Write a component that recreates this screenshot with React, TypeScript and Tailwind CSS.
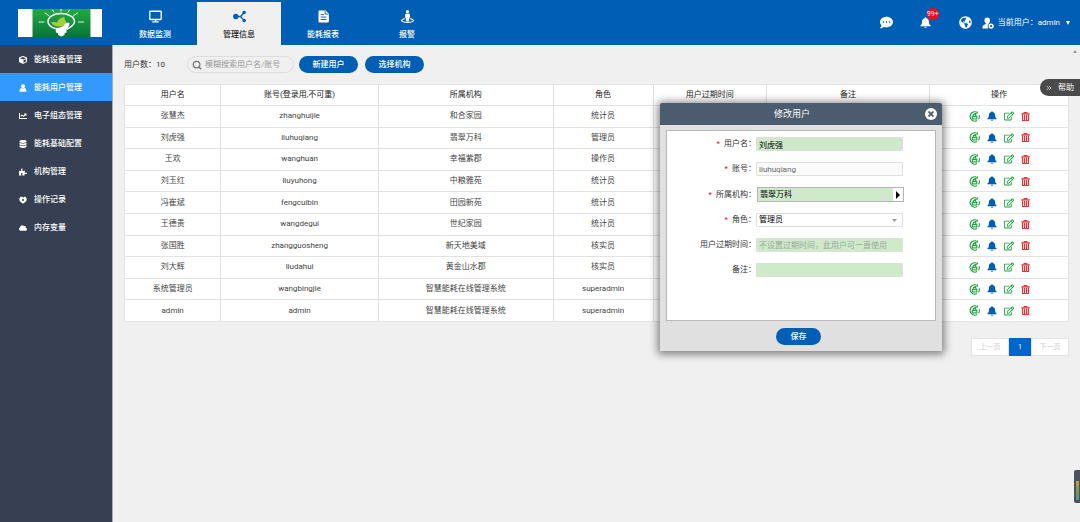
import { useState } from 'react';
import { FaCloud, FaCommentDots, FaCube, FaDatabase, FaPuzzlePiece, FaStreetView } from 'react-icons/fa';
import { FaChartLine, FaGlobeAmericas, FaRegEdit } from 'react-icons/fa';
import { ChevronsRight, Search } from 'lucide-react';

interface User {
  name: string;
  account: string;
  org: string;
  role: string;
}

const users: User[] = [
  { name: '张慧杰', account: 'zhanghuijie', org: '和合家园', role: '统计员' },
  { name: '刘虎强', account: 'liuhuqiang', org: '翡翠万科', role: '管理员' },
  { name: '王欢', account: 'wanghuan', org: '幸福紫郡', role: '操作员' },
  { name: '刘玉红', account: 'liuyuhong', org: '中粮雅苑', role: '统计员' },
  { name: '冯崔斌', account: 'fengcuibin', org: '田园新苑', role: '统计员' },
  { name: '王德贵', account: 'wangdegui', org: '世纪家园', role: '统计员' },
  { name: '张国胜', account: 'zhangguosheng', org: '新天地美域', role: '核实员' },
  { name: '刘大辉', account: 'liudahui', org: '黄金山水郡', role: '核实员' },
  { name: '系统管理员', account: 'wangbingjie', org: '智慧能耗在线管理系统', role: 'superadmin' },
  { name: 'admin', account: 'admin', org: '智慧能耗在线管理系统', role: 'superadmin' },
];

const columns = [
  { title: '用户名', width: 'w-[10.2%]' },
  { title: '账号(登录用,不可重)', width: 'w-[16.7%]' },
  { title: '所属机构', width: 'w-[18.5%]' },
  { title: '角色', width: 'w-[10.6%]' },
  { title: '用户过期时间', width: 'w-[12%]' },
  { title: '备注', width: 'w-[17.3%]' },
  { title: '操作', width: 'w-[14.7%]' },
];

const menu = [
  { label: '能耗设备管理', icon: FaCube },
  { label: '能耗用户管理', icon: PersonIcon },
  { label: '电子组态管理', icon: FaChartLine },
  { label: '能耗基础配置', icon: FaDatabase },
  { label: '机构管理', icon: FaPuzzlePiece },
  { label: '操作记录', icon: RecordIcon },
  { label: '内存变量', icon: FaCloud },
];

const tabs = [
  { label: '数据监测', icon: MonitorIcon },
  { label: '管理信息', icon: NodesIcon },
  { label: '能耗报表', icon: ReportIcon },
  { label: '报警', icon: FaStreetView },
];

function MonitorIcon({ className }: { className?: string }) {
  return (
    <svg viewBox="0 0 14 14" className={className} fill="none" stroke="currentColor" strokeWidth="1.5">
      <rect x="0.8" y="1.4" width="12.4" height="8.8" rx="0.8" />
      <path d="M7 10v2M3.600 12.800h6.800" />
    </svg>
  );
}

function NodesIcon({ className }: { className?: string }) {
  return (
    <svg viewBox="0 0 14 14" className={className} fill="currentColor">
      <path d="M3 7h5l4-4M8 7l4 4.2" fill="none" stroke="currentColor" strokeWidth="1.4" />
      <circle cx="3" cy="7" r="2.900" />
      <circle cx="12" cy="2.8" r="1.900" />
      <circle cx="12" cy="11.2" r="1.900" />
    </svg>
  );
}

function ReportIcon({ className }: { className?: string }) {
  return (
    <svg viewBox="0 0 14 14" className={className}>
      <path d="M1.600 1.500a1 1 0 0 1 1-1h6.600l3.600 3.600V12.500a1 1 0 0 1-1 1h-9.200a1 1 0 0 1-1-1z" fill="currentColor" />
      <path d="M4 5h3.6M4 7.6h6.2M4 10.2h6.2M8.8 1.4v3h3.4" fill="none" stroke="#005eb5" strokeWidth="1" />
    </svg>
  );
}

function PersonIcon({ className }: { className?: string }) {
  return (
    <svg viewBox="0 0 16 16" className={className} fill="currentColor">
      <circle cx="8" cy="4.600" r="4" />
      <path d="M1 15.500c0-4.500 1.800-7.500 4-7.500 1.500 1 4.500 1 6 0 2.200 0 4 3 4 7.500z" />
    </svg>
  );
}

function RecordIcon({ className }: { className?: string }) {
  return (
    <svg viewBox="0 0 16 16" className={className} fill="currentColor" fillRule="evenodd">
      <path d="M3 1.500h3l2 2 2-2h3l2.500 4-1 5L8 15.500 1.500 10.500l-1-5zM8 5.500l-2.500 2.500L8 10.500l2.500-2.500z" />
    </svg>
  );
}

function BellIcon({ className }: { className?: string }) {
  return (
    <svg viewBox="0 0 16 16" className={className} fill="currentColor">
      <path d="M8 .5c.8 0 1.300.5 1.300 1.200C11.800 2.300 13 4.300 13 6.800c0 3 .8 4.400 2.500 5.400v1.100H.5v-1.100C2.200 11.200 3 9.800 3 6.800c0-2.500 1.200-4.500 3.700-5.100C6.700 1 7.200.5 8 .5z" />
      <path d="M6 14h4c-.2 1-1 1.600-2 1.600S6.200 15 6 14z" />
    </svg>
  );
}

function AccountIcon({ className }: { className?: string }) {
  return (
    <svg viewBox="0 0 16 16" className={className} fill="currentColor">
      <path d="M7 .5c2.300 0 3.800 1.700 3.800 4 0 1.700-.8 3-1.800 3.900v.9c-.9.8-1.500 1.900-1.500 3.100 0 1.100.4 2 1 2.800H.5c0-3.700 1-4.700 4.700-5.900v-.9c-1.100-.9-1.900-2.200-1.900-3.900C3.300 2.200 4.700.5 7 .5z" />
      <circle cx="12.200" cy="12" r="2.500" fill="none" stroke="currentColor" strokeWidth="2" />
    </svg>
  );
}

function TrashIcon({ className }: { className?: string }) {
  return (
    <svg viewBox="0 0 16 16" className={className} fill="none" stroke="currentColor" strokeWidth="2">
      <path d="M.5 3.300h15" strokeWidth="2.200" />
      <path d="M5.500 2.500V1h5v1.500M2.700 4v11h10.600V4M6.200 5v9M9.800 5v9" />
    </svg>
  );
}

// circular arrow with a padlock: resets the password
function ResetIcon() {
  return (
    <svg viewBox="0 0 22 22" className="size-[11px]" fill="none" stroke="currentColor" strokeWidth="2.200">
      <path d="M14.500 2A9.400 9.400 0 1 0 16 19.200M20.300 8.500a9.400 9.400 0 0 1-1.300 8" />
      <path d="M11.500 6l5-2.500M16 1l1.500 3.500" />
      <rect x="6.600" y="10.800" width="9" height="5" />
      <path d="M8.400 10.500V9a2.700 2.700 0 0 1 5.400 0v1.500" />
    </svg>
  );
}

function Logo() {
  return (
    <svg viewBox="0 0 84 28" className="h-7 w-[84px]">
      <defs>
        <linearGradient id="leaf" x1="0" y1="0" x2="0" y2="1">
          <stop offset="0" stopColor="#22aa45" />
          <stop offset="1" stopColor="#087536" />
        </linearGradient>
      </defs>
      <rect width="84" height="28" fill="#fff" />
      <rect x="14.500" width="58" height="28" fill="url(#leaf)" />
      <g fill="none" stroke="#fff" strokeLinecap="round">
        <path strokeWidth="1.500" d="M37 19.500c-4-1.500-7-3.500-7-7C30 8 35.500 4.500 43 4.500S56.500 8 56.500 12.500c0 4-4 5.500-7 7.500" />
        <path strokeWidth="0.900" d="M21 13h5M60.500 13h5M27 4l4 2.800M55.500 6.800l4-2.800M34.500 1l1.500 2.300M50 3.300L51.500 1M43 .3v2" />
      </g>
      <path d="M33 13c3 0 4.500-.500 6 .500 1-3.500 4-5 7.500-5.500-.500 2.500 1.500 3.500 2 6-2 3-5.500 3.500-8 3.500-3.500 0-6-1.500-7.500-4.500z" fill="#a5ce39" />
      <path d="M37.500 19c4-.500 7-.500 9-3.500 1.500-2 3.500-2 5-1.500 0 3-1.500 5-3 6.500v3l-2 .7V26l-3 1.500-3.500-1.500v-1.800l-2-.7z" fill="#fff" />
    </svg>
  );
}

function Header() {
  return (
    <header className="flex h-[45px] bg-[#005eb5] text-white">
      <div className="flex w-[113px] shrink-0 items-center pl-[18px]">
        <Logo />
      </div>
      <nav className="flex pt-[2px]">
        {tabs.map(({ label, icon: Icon }, i) => (
          <a
            key={label}
            href="#"
            className={`flex w-[84px] flex-col items-center gap-[7px] pt-[8px] font-medium ${i === 1 ? 'bg-[#f0f0f0] text-[#222]' : ''}`}
          >
            <Icon className={`size-[13px] ${i === 1 ? 'text-[#005eb5]' : ''}`} />
            <span className="leading-[10px]">{label}</span>
          </a>
        ))}
      </nav>
      <div className="ml-auto flex items-center pr-[10px]">
        <button aria-label="消息" className="mr-[27px]">
          <FaCommentDots className="size-[13px]" />
        </button>
        <button aria-label="通知" className="relative mr-[28px]">
          <BellIcon className="size-[11px]" />
          <span className="absolute -top-[9px] left-[7px] flex size-[12px] items-center justify-center rounded-full bg-[#f00c18] text-[7px]">99+</span>
        </button>
        <button aria-label="语言" className="mr-[10px]">
          <FaGlobeAmericas className="size-[13px]" />
        </button>
        <button className="flex items-center">
          <AccountIcon className="mr-[4px] size-[12px]" />
          <span className="mr-[6px]">当前用户：admin</span>
          <svg viewBox="0 0 4 4" className="size-[4px]" fill="currentColor"><path d="M0 0h4L2 4z" /></svg>
        </button>
      </div>
    </header>
  );
}

function Sidebar() {
  return (
    <aside className="w-[113px] shrink-0 border-r border-[#a5aab3] bg-[#364052] text-white">
      {menu.map(({ label, icon: Icon }, i) => (
        <a key={label} href="#" className={`flex h-[28px] items-center gap-[7px] pt-[2px] pl-[19px] font-medium ${i === 1 ? 'bg-[#3399ff]' : ''}`}>
          <Icon className="size-[8px]" />
          {label}
        </a>
      ))}
    </aside>
  );
}

function UserTable() {
  return (
    <table className="h-[238px] w-full table-fixed border-collapse bg-white text-center text-[#444]">
      <thead>
        <tr className="h-[21px]">
          {columns.map((col) => (
            <th key={col.title} className={`border border-[#e2e2e2] font-normal text-[#222] ${col.width}`}>{col.title}</th>
          ))}
        </tr>
      </thead>
      <tbody>
        {users.map((user) => (
          <tr key={user.account} className="h-[21px]">
            <td className="border border-[#e2e2e2]">{user.name}</td>
            <td className="border border-[#e2e2e2]">{user.account}</td>
            <td className="border border-[#e2e2e2]">{user.org}</td>
            <td className="border border-[#e2e2e2]">{user.role}</td>
            <td className="border border-[#e2e2e2]"></td>
            <td className="border border-[#e2e2e2]"></td>
            <td className="border border-[#e2e2e2]">
              <div className="flex items-center justify-center gap-[7px]">
                <button aria-label="重置密码" className="text-[#18a03c]"><ResetIcon /></button>
                <button aria-label="提醒" className="text-[#005eb5]"><BellIcon className="size-[10px]" /></button>
                <button aria-label="编辑" className="text-[#18a03c]"><FaRegEdit className="size-[10px]" /></button>
                <button aria-label="删除" className="text-[#f03030]"><TrashIcon className="size-[9px]" /></button>
              </div>
            </td>
          </tr>
        ))}
      </tbody>
    </table>
  );
}

function Field({ id, label, required, children }: { id: string; label: string; required?: boolean; children: React.ReactNode }) {
  return (
    <div className="flex items-center">
      <label htmlFor={id} className="w-[89px] shrink-0 text-right text-[#333]">
        {required && <span className="mr-[4px] text-[#f00]">*</span>}
        {label}：
      </label>
      {children}
    </div>
  );
}

const inputClass = 'h-[14px] w-[147px] rounded-[1px] border border-[#dcdfdc] px-[2px] placeholder:text-[#9aa89a]';

function EditDialog({ onClose }: { onClose: () => void }) {
  return (
    <div
      role="dialog"
      aria-label="修改用户"
      className="absolute top-[103px] right-[138px] w-[282px] rounded-t-[2px] bg-[#e0e0e0] shadow-[0_1px_8px_2px_rgba(0,0,0,0.5)]"
    >
      <div className="relative flex h-[22px] items-center justify-center rounded-t-[2px] bg-[#4b5c6e] pr-[18px] text-[9px] text-white">
        修改用户
        <button aria-label="关闭" onClick={onClose} className="absolute right-[5px] flex size-[12px] items-center justify-center rounded-full bg-white">
          <svg viewBox="0 0 6 6" className="size-[6px]" stroke="#4b5c6e" strokeWidth="1.800"><path d="M.500.500l5 5M5.500.500l-5 5" /></svg>
        </button>
      </div>
      <div className="px-[6px] pt-[5px] pb-[6px]">
        <form className="flex flex-col gap-[11px] border border-[#b8b8b8] bg-white pt-[6px] pb-[43px]">
          <Field id="name" label="用户名" required>
            <input id="name" defaultValue="刘虎强" className={`${inputClass} bg-[#ceeacb] text-black`} />
          </Field>
          <Field id="account" label="账号" required>
            <input id="account" defaultValue="liuhuqiang" readOnly className={`${inputClass} bg-[#fafafa] text-[#666]`} />
          </Field>
          <Field id="org" label="所属机构" required>
            <div className="ml-px flex h-[15px] w-[147px] border border-[#b5b5b5]">
              <input id="org" defaultValue="翡翠万科" className="min-w-0 grow bg-[#ceeacb] px-[2px] text-black" />
              <button type="button" aria-label="选择机构" className="flex w-[10px] items-center justify-center bg-white text-black">
                <svg viewBox="0 0 4 8" className="h-[8px] w-[4px]" fill="currentColor"><path d="M0 0l4 4-4 4z" /></svg>
              </button>
            </div>
          </Field>
          <Field id="role" label="角色" required>
            <div className="relative">
              <select id="role" defaultValue="管理员" className={`${inputClass} block appearance-none bg-white text-black`}>
                <option>管理员</option>
                <option>统计员</option>
                <option>操作员</option>
                <option>核实员</option>
              </select>
              <svg viewBox="0 0 5 3" className="pointer-events-none absolute top-[6px] right-[6px] h-[3px] w-[5px]" fill="#999"><path d="M0 0h5L2.500 3z" /></svg>
            </div>
          </Field>
          <Field id="expire" label="用户过期时间">
            <input id="expire" placeholder="不设置过期时间，此用户可一直使用" className={`${inputClass} bg-[#ceeacb]`} />
          </Field>
          <Field id="remark" label="备注">
            <input id="remark" className={`${inputClass} bg-[#ceeacb]`} />
          </Field>
        </form>
        <div className="flex justify-center pt-[7px] pr-[5px]">
          <button className="h-[17px] w-[45px] rounded-full bg-[#005eb5] font-medium text-white">保存</button>
        </div>
      </div>
    </div>
  );
}

export default function App() {
  const [editing, setEditing] = useState(true);
  const [keyword, setKeyword] = useState('');

  return (
    <div className="relative flex min-h-screen flex-col overflow-hidden bg-[#f0f0f0] font-['Roboto','Noto_Sans_CJK_SC',sans-serif] text-[8px] leading-[12px]">
      <Header />
      <div className="flex grow">
        <Sidebar />
        <main className="min-w-0 grow px-[11px] pt-[11px]">
          <div className="mb-[11px] flex items-center">
            <span className="w-[63px] text-[#333]">用户数：10</span>
            <label className="mr-[5px] flex h-[17px] w-[107px] items-center gap-[3px] rounded-full border border-[#dcdcdc] pl-[4px]">
              <Search className="size-[10px] text-[#777]" strokeWidth={3} />
              <input
                aria-label="搜索用户"
                className="w-[85px] placeholder:text-[#999]"
                placeholder="模糊搜索用户名/账号"
                value={keyword}
                onChange={(e) => setKeyword(e.target.value)}
              />
            </label>
            <button className="mr-[7px] h-[17px] w-[59px] rounded-full bg-[#005eb5] font-medium text-white">新建用户</button>
            <button className="h-[17px] w-[59px] rounded-full bg-[#005eb5] font-medium text-white">选择机构</button>
          </div>
          <UserTable />
          <div className="mt-[16px] flex justify-end text-[7px]">
            <button className="h-[18px] w-[38px] border border-[#e4e4e4] bg-white text-[#ccc]">上一页</button>
            <button className="h-[18px] w-[22px] bg-[#0066cc] text-white">1</button>
            <button className="h-[18px] w-[38px] border border-[#e4e4e4] bg-white text-[#ccc]">下一页</button>
          </div>
        </main>
      </div>

      {editing && <EditDialog onClose={() => setEditing(false)} />}

      <svg viewBox="0 0 4 3" className="absolute top-[50px] right-[3px] h-[3px] w-[4px]" fill="#999"><path d="M0 3l2-3 2 3z" /></svg>
      <button className="absolute top-[79px] right-0 flex h-[17px] w-[40px] items-center gap-[5px] rounded-l-full bg-[#4a4a4a] pl-[5px] text-white">
        <ChevronsRight className="size-[8px]" />
        帮助
      </button>
      <div className="absolute right-0 bottom-[19px] h-[33px] w-[6px] rounded-l-[2px] bg-[#4c5160] pt-[11px] pl-[2px]">
        <div className="h-[19px] w-[3px] bg-linear-to-b from-[#c9a03c] via-[#6f9c50] to-[#35a08c]" />
      </div>
    </div>
  );
}
